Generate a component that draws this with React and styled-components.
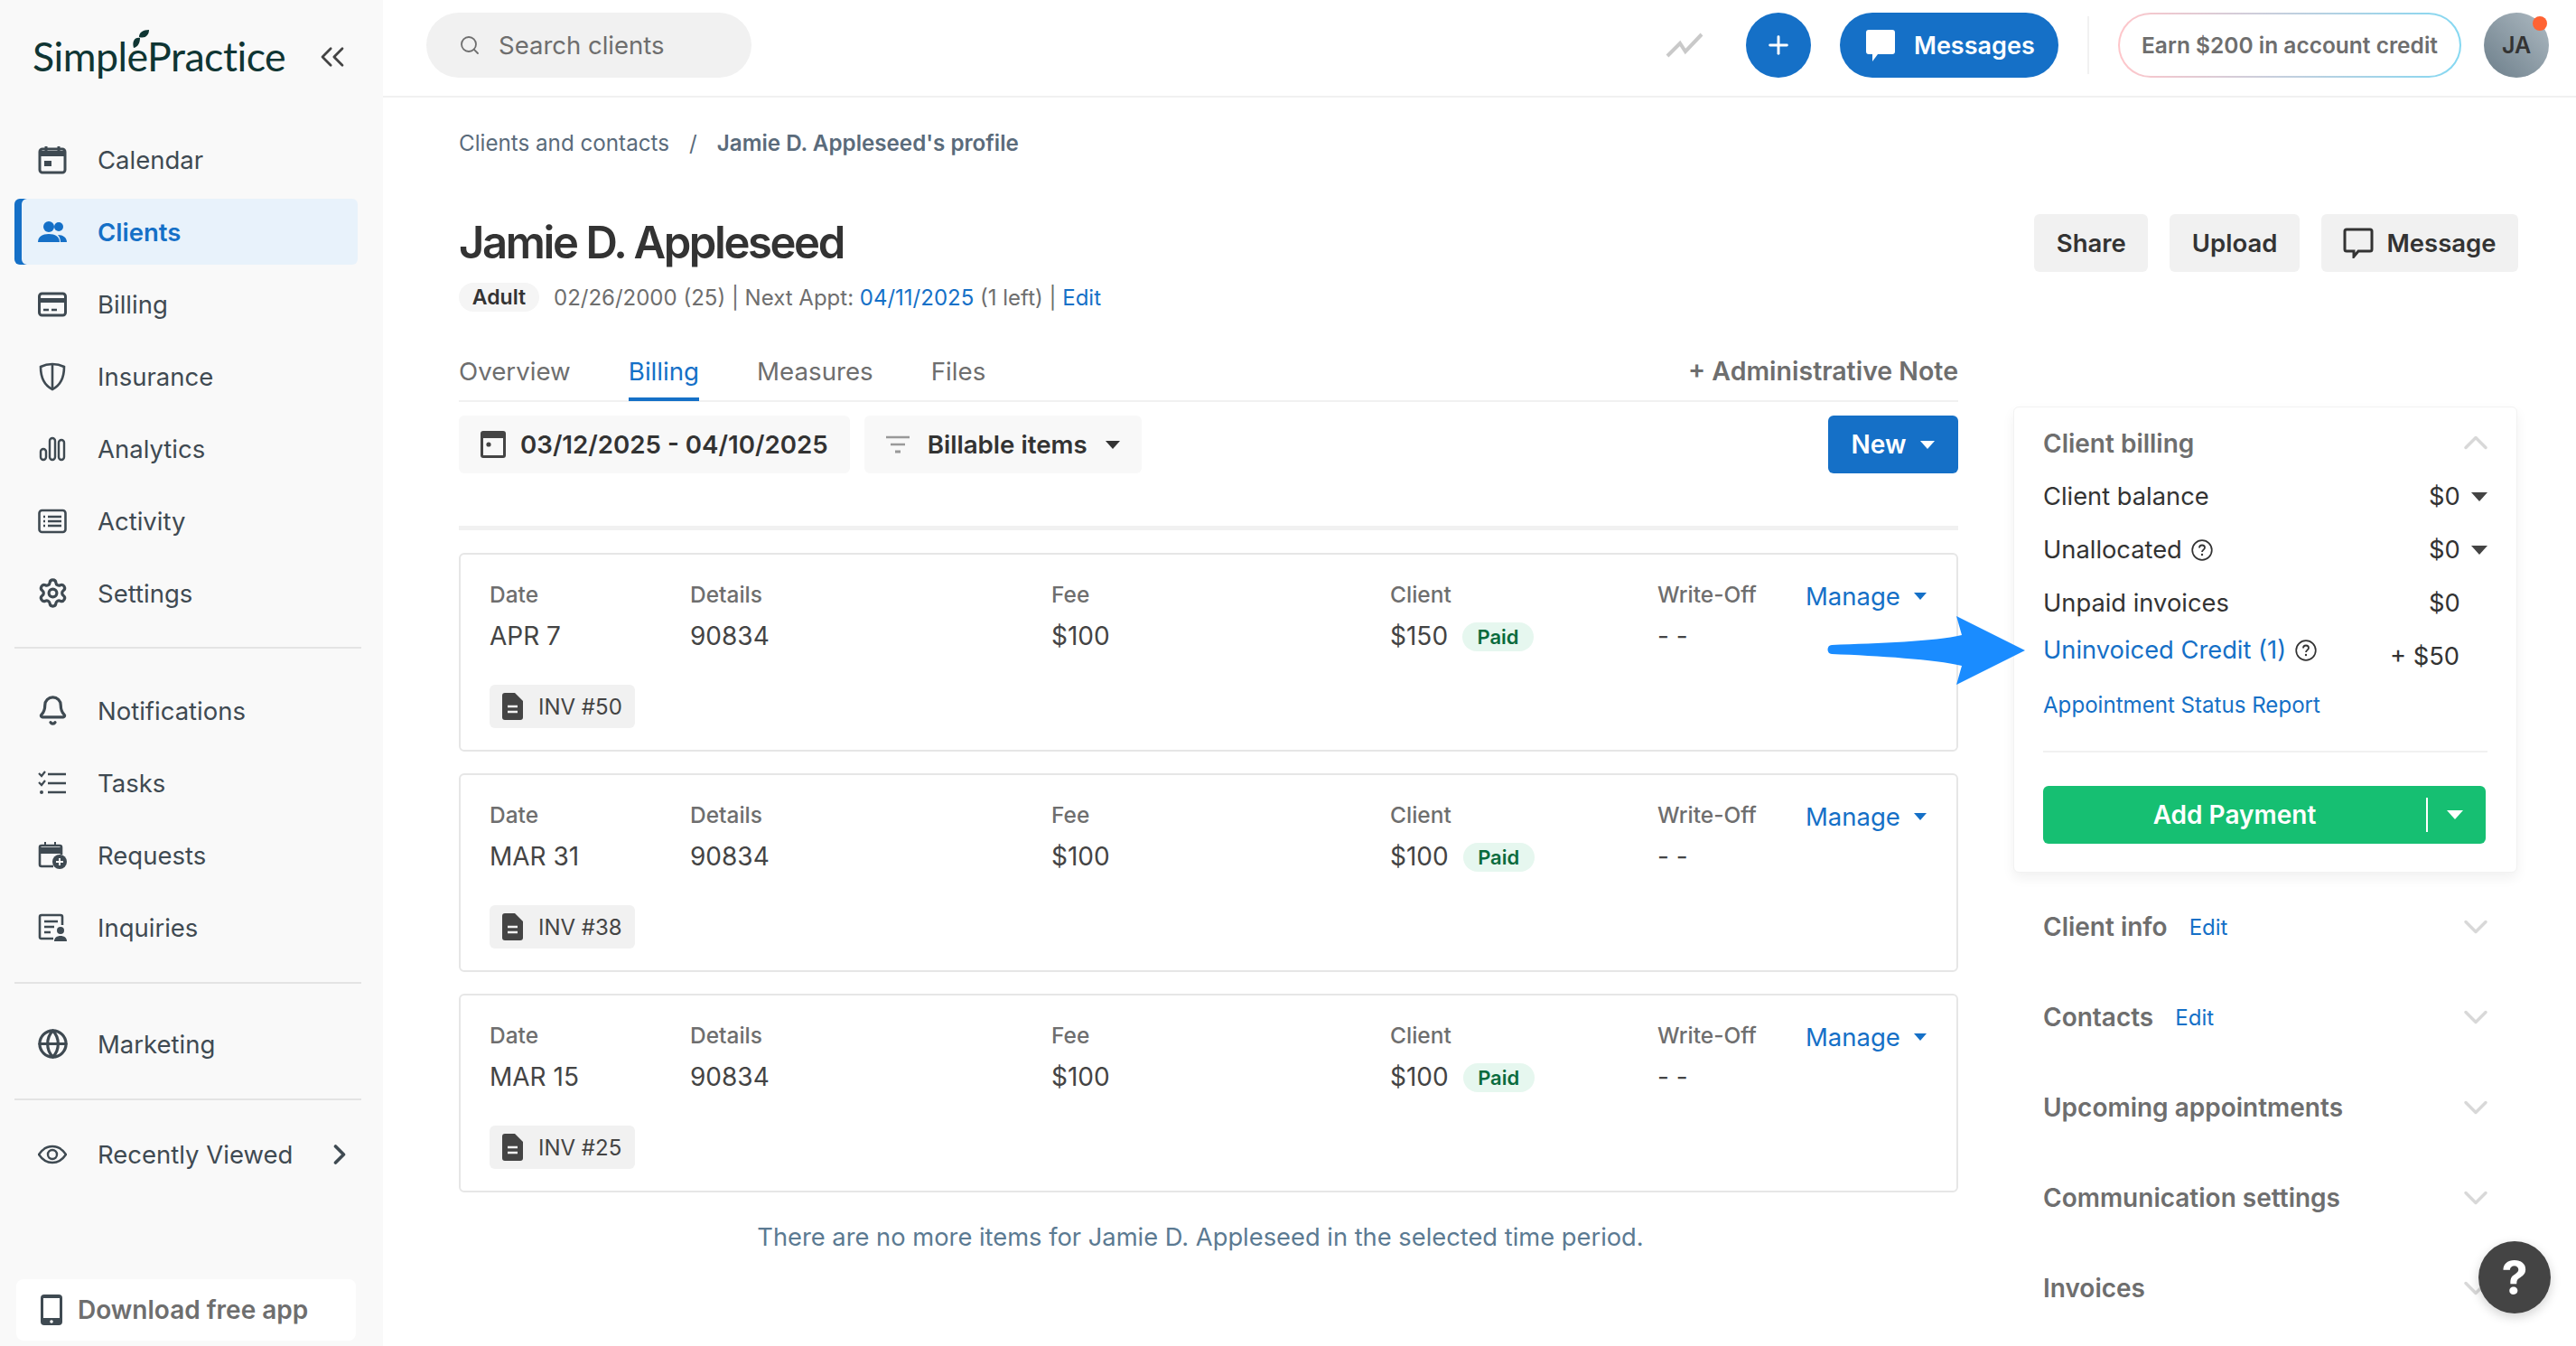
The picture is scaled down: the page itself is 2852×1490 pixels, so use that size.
import React from "react";
import styled, { createGlobalStyle } from "styled-components";
import { ChevronsLeft, ChevronRight, ChevronDown, ChevronUp, Search, Plus, Settings, Bell, Globe } from "lucide-react";

const GlobalStyle = createGlobalStyle`
  html, body {
    margin: 0;
    padding: 0;
    background: #ffffff;
    font-family: Inter, "Noto Sans", sans-serif;
    color: #333333;
    overflow: hidden;
  }
  * { box-sizing: border-box; }
`;

const BLUE = "#1570c7";

const Page = styled.div`
  display: grid;
  grid-template-columns: 424px 1fr;
  width: 2852px;
  height: 1490px;
  overflow: hidden;
`;

/* ---------- sidebar ---------- */
const Sidebar = styled.aside`
  display: flex;
  flex-direction: column;
  height: 1490px;
  background: #f9f9f9;
  padding: 0 24px 6px 16px;
`;

const LogoRow = styled.div`
  display: flex;
  align-items: center;
  justify-content: space-between;
  height: 125px;
  padding: 0 10px 0 20px;
  margin-bottom: 15px;
  color: #444444;
`;

const LogoWrap = styled.div`
  position: relative;
  font-family: Lato, sans-serif;
  font-size: 44.7px;
  font-weight: 400;
  letter-spacing: -0.5px;
  color: #0f3533;
  line-height: 1;
  margin-top: -1px;
`;

const Leaf = styled.svg`
  position: absolute;
  left: 110px;
  top: -7px;
  width: 20px;
  height: 20px;
`;

const NavGroup = styled.nav`
  display: flex;
  flex-direction: column;
  gap: 7px;
  margin-top: ${(p) => p.$top || 0}px;
  margin-bottom: ${(p) => p.$bottom || 0}px;
`;

const NavItem = styled.a`
  display: flex;
  align-items: center;
  gap: 34px;
  height: 73px;
  width: 380px;
  padding-left: 26px;
  white-space: nowrap;
  font-size: 27.5px;
  font-weight: ${(p) => (p.$active ? 600 : 400)};
  color: ${(p) => (p.$active ? BLUE : "#3f4a52")};
  background: ${(p) => (p.$active ? "#e8f2fb" : "transparent")};
  border-radius: 6px;
  box-shadow: ${(p) => (p.$active ? `inset 8px 0 0 ${BLUE}` : "none")};
`;

const NavIcon = styled.span`
  display: flex;
  align-items: center;
  justify-content: center;
  width: 32px;
  height: 32px;
  flex: none;

  svg {
    flex: none;
  }
`;

const Divider = styled.hr`
  width: 384px;
  height: 2px;
  margin: 0;
  border: 0;
  background: #e4e4e4;
`;

const RecentArrow = styled.span`
  display: flex;
  margin-left: auto;
  margin-right: 28px;
`;

const DownloadBox = styled.div`
  display: flex;
  align-items: center;
  gap: 17px;
  width: 376px;
  height: 68px;
  margin: auto 0 0 2px;
  padding-left: 27px;
  background: #ffffff;
  border-radius: 8px;
  font-size: 28px;
  font-weight: 600;
  color: #6e6e6e;
`;

/* ---------- top bar ---------- */
const Main = styled.main`
  display: flex;
  flex-direction: column;
  min-width: 0;
`;

const TopBar = styled.header`
  display: flex;
  align-items: center;
  height: 108px;
  padding: 0 30px 6px 48px;
  border-bottom: 2px solid #f1f1f1;
  flex: none;
`;

const SearchPill = styled.div`
  display: flex;
  align-items: center;
  gap: 20px;
  width: 360px;
  height: 72px;
  padding-left: 36px;
  border-radius: 36px;
  background: #f1f1f1;
  color: #6e6e6e;
  font-size: 27.5px;
`;

const TrendIcon = styled.svg`
  width: 42px;
  height: 30px;
  margin-left: auto;
  margin-right: 47px;
`;

const RoundButton = styled.button`
  display: flex;
  align-items: center;
  justify-content: center;
  width: 72px;
  height: 72px;
  border: 0;
  padding: 0;
  border-radius: 50%;
  background: ${BLUE};
  color: #ffffff;
  margin-right: 32px;
`;

const MessagesButton = styled.button`
  display: flex;
  align-items: center;
  gap: 19px;
  width: 242px;
  height: 72px;
  padding: 0 0 0 27px;
  border: 0;
  border-radius: 36px;
  background: ${BLUE};
  color: #ffffff;
  font-family: inherit;
  font-size: 27px;
  font-weight: 600;
`;

const TopSeparator = styled.span`
  width: 2px;
  height: 64px;
  margin: 0 32px;
  background: #f1f1f1;
`;

const CreditPill = styled.div`
  display: flex;
  align-items: center;
  justify-content: center;
  width: 380px;
  height: 72px;
  border: 2px solid transparent;
  border-radius: 36px;
  background: linear-gradient(#fff, #fff) padding-box,
    linear-gradient(90deg, #ffc6ca, #84d8f2) border-box;
  color: #6e6e6e;
  font-size: 24.5px;
  font-weight: 600;
`;

const Avatar = styled.div`
  position: relative;
  display: flex;
  align-items: center;
  justify-content: center;
  width: 72px;
  height: 72px;
  margin-left: 25px;
  border-radius: 50%;
  background: linear-gradient(45deg, #6c7e8a, #aebac2);
  color: #333333;
  font-size: 25px;
  font-weight: 600;
`;

const AvatarDot = styled.span`
  position: absolute;
  top: 4px;
  right: 2px;
  width: 16px;
  height: 16px;
  border-radius: 50%;
  background: #ff6333;
`;

/* ---------- profile ---------- */
const Content = styled.div`
  flex: 1;
  padding: 30px 64px 0 84px;
`;

const Breadcrumbs = styled.div`
  display: flex;
  gap: 22px;
  height: 40px;
  align-items: center;
  font-size: 24.2px;
  color: #5a6b7b;
`;

const Crumb = styled.span`
  font-weight: ${(p) => (p.$current ? 600 : 400)};
`;

const ProfileHead = styled.div`
  display: flex;
  justify-content: space-between;
  align-items: flex-start;
  margin-top: 59px;
`;

const Title = styled.h1`
  margin: 2px 0 0;
  font-size: 49px;
  line-height: 60px;
  font-weight: 600;
  letter-spacing: -2.4px;
  color: #333333;
`;

const MetaRow = styled.div`
  display: flex;
  align-items: center;
  gap: 16px;
  margin-top: 14px;
  font-size: 24px;
  color: #6e6e6e;
`;

const AdultPill = styled.span`
  display: flex;
  align-items: center;
  justify-content: center;
  width: 89px;
  height: 32px;
  border-radius: 16px;
  background: #f5f5f5;
  color: #333333;
  font-size: 23px;
  font-weight: 600;
`;

const TextLink = styled.a`
  color: ${BLUE};
`;

const Actions = styled.div`
  display: flex;
  gap: 24px;
`;

const ActionButton = styled.button`
  display: flex;
  align-items: center;
  gap: 14px;
  height: 64px;
  padding: 0 24.5px;
  border: 0;
  border-radius: 6px;
  background: #f1f1f1;
  color: #333333;
  font-family: inherit;
  font-size: 27.5px;
  font-weight: 600;
`;

const Columns = styled.div`
  display: grid;
  grid-template-columns: 1660px 558px;
  column-gap: 61px;
  margin-top: 35px;
`;

const LeftCol = styled.section`
  min-width: 0;
`;

const TabRow = styled.div`
  display: flex;
  align-items: flex-start;
  gap: 64px;
  height: 65px;
  border-bottom: 2px solid #f1f1f1;
  font-size: 27.7px;
`;

const Tab = styled.a`
  height: 64px;
  padding-top: 11px;
  line-height: 40px;
  color: ${(p) => (p.$active ? BLUE : "#6e6e6e")};
  border-bottom: 4px solid ${(p) => (p.$active ? BLUE : "transparent")};
`;

const AdminNote = styled.a`
  height: 64px;
  padding-top: 11px;
  margin-left: auto;
  line-height: 40px;
  font-size: 28.5px;
  font-weight: 600;
  color: #6e6e6e;
`;

const Toolbar = styled.div`
  display: flex;
  gap: 16px;
  margin-top: 15px;
`;

const FilterButton = styled.button`
  display: flex;
  align-items: center;
  gap: ${(p) => p.$gap}px;
  height: 64px;
  padding: 0 24px;
  border: 0;
  border-radius: 6px;
  background: #f8f8f8;
  color: #333333;
  font-family: inherit;
  font-size: 27.7px;
  font-weight: 600;
`;

const NewButton = styled.button`
  display: flex;
  align-items: center;
  justify-content: center;
  gap: 16px;
  width: 144px;
  height: 64px;
  margin-left: auto;
  padding: 0;
  border: 0;
  border-radius: 6px;
  background: ${BLUE};
  color: #ffffff;
  font-family: inherit;
  font-size: 28px;
  font-weight: 600;
`;

const Caret = styled.span`
  display: inline-block;
  flex: none;
  width: 0;
  height: 0;
  border-left: ${(p) => p.$size || 8}px solid transparent;
  border-right: ${(p) => p.$size || 8}px solid transparent;
  border-top: ${(p) => (p.$size || 8) + 1}px solid ${(p) => p.$color || "currentColor"};
`;

const ThickRule = styled.div`
  height: 5px;
  margin: 58px 0 25px;
  background: #f1f1f1;
`;

const CardList = styled.div`
  display: flex;
  flex-direction: column;
  gap: 24px;
`;

const ItemCard = styled.article`
  height: 220px;
  padding: 29px 0 0 32px;
  border: 2px solid #e6e6e6;
  border-radius: 6px;
`;

const ItemGrid = styled.div`
  display: grid;
  grid-template-columns: 222px 400px 375px 296px 164px 150px;
`;

const CellLabel = styled.div`
  height: 30px;
  line-height: 30px;
  font-size: 24.5px;
  font-weight: 500;
  color: #6e6e6e;
`;

const CellValue = styled.div`
  display: flex;
  align-items: center;
  gap: 16px;
  height: 36px;
  margin-top: 13px;
  font-size: 28px;
  color: #444444;
`;

const PaidPill = styled.span`
  display: flex;
  align-items: center;
  justify-content: center;
  width: 79px;
  height: 32px;
  margin-top: 2px;
  border-radius: 16px;
  background: #e6f7ef;
  color: #0a6b3d;
  font-size: 22px;
  font-weight: 600;
`;

const ManageLink = styled.a`
  display: flex;
  align-items: center;
  gap: 15px;
  height: 34px;
  font-size: 27.5px;
  color: ${BLUE};
`;

const InvoicePill = styled.div`
  display: inline-flex;
  align-items: center;
  gap: 16px;
  width: 161px;
  height: 48px;
  margin-top: 36px;
  padding-left: 14px;
  border-radius: 6px;
  background: #f1f1f1;
  font-size: 24px;
  color: #444444;
`;

const EndNote = styled.p`
  margin: 30px 0 0;
  padding-right: 18px;
  line-height: 40px;
  text-align: center;
  font-size: 27.3px;
  color: #5b7a92;
`;

/* ---------- right column ---------- */
const RightCol = styled.aside`
  padding-top: 70px;
`;

const BillingCard = styled.div`
  position: relative;
  height: 516px;
  padding: 22px 32px 0;
  border-radius: 6px;
  background: #ffffff;
  border: 1px solid #f2f2f2;
  box-shadow: 0 6px 14px rgba(0, 0, 0, 0.06);
`;

const SectionHead = styled.div`
  display: flex;
  align-items: center;
  justify-content: space-between;
  height: 36px;
  margin-bottom: 11px;
  font-size: 28px;
  font-weight: 600;
  color: #6e6e6e;
`;

const HeadChevron = styled.span`
  display: flex;
  margin-right: -9px;
  margin-top: -2px;
`;

const BalanceRow = styled.div`
  display: flex;
  align-items: center;
  height: 59px;
  font-size: 27.3px;
  color: #333333;
`;

const RowLabel = styled.span`
  display: flex;
  align-items: center;
  gap: 10px;
  flex: 1;
  color: ${(p) => (p.$link ? BLUE : "inherit")};
`;

const RowAmount = styled.span`
  width: 72px;
  text-align: left;
  padding-left: 27px;
`;

const RowSuffix = styled.span`
  display: flex;
  width: 20px;
  justify-content: flex-end;
`;

const CreditRow = styled.div`
  display: flex;
  align-items: flex-start;
  justify-content: space-between;
  height: 67px;
  padding: 6px 31px 0 0;
  font-size: 27.3px;
`;

const CreditAmount = styled.span`
  margin-top: 7px;
  color: #333333;
`;

const ReportLink = styled.a`
  display: block;
  line-height: 34px;
  font-size: 24.1px;
  color: ${BLUE};
`;

const PanelRule = styled.div`
  height: 2px;
  margin: 33px 0 37px;
  background: #f1f1f1;
`;

const PaymentButton = styled.div`
  display: flex;
  align-items: center;
  width: 490px;
  height: 64px;
  border-radius: 6px;
  background: #16bf72;
  color: #ffffff;
  font-size: 28px;
  font-weight: 600;
`;

const PaymentLabel = styled.span`
  width: 424px;
  text-align: center;
`;

const PaymentSplit = styled.span`
  display: flex;
  align-items: center;
  justify-content: center;
  flex: 1;
  height: 38px;
  padding-right: 4px;
  border-left: 2px solid #ffffff;
`;

const Accordions = styled.div`
  margin-top: 10px;
`;

const AccordionRow = styled.div`
  display: flex;
  align-items: center;
  gap: 24px;
  height: 100px;
  padding: 0 33px;
  font-size: 28px;
  font-weight: 600;
  color: #6e6e6e;
`;

const EditLink = styled.a`
  font-size: 24px;
  font-weight: 400;
  color: ${BLUE};
`;

const AccordionChevron = styled.span`
  display: flex;
  margin-left: auto;
  margin-right: -9px;
`;

const HelpButton = styled.button`
  position: fixed;
  left: 2744px;
  top: 1374px;
  width: 80px;
  height: 80px;
  padding: 0;
  border: 0;
  border-radius: 50%;
  background: #444444;
  color: #ffffff;
  font-family: inherit;
  font-size: 52px;
  font-weight: 700;
  box-shadow: 0 4px 12px rgba(0, 0, 0, 0.18);
`;

const ArrowSvg = styled.svg`
  position: fixed;
  left: 2020px;
  top: 676px;
  width: 226px;
  height: 90px;
`;

/* ---------- drawn icons ---------- */
const Svg = ({ children, size = 32, vb = "0 0 32 32", ...rest }) => (
  <svg width={size} height={size} viewBox={vb} fill="none" {...rest}>
    {children}
  </svg>
);

const CalendarIcon = ({ color = "#3f4a52" }) => (
  <Svg>
    <rect x="2" y="4" width="28" height="26" rx="3" stroke={color} strokeWidth="3" />
    <path d="M2 6h28v6H2z" fill={color} />
    <path d="M9 1v5M23 1v5" stroke={color} strokeWidth="3" />
    <rect x="7" y="17" width="8" height="6" fill={color} />
  </Svg>
);

const ClientsIcon = () => (
  <Svg>
    <circle cx="12" cy="10" r="6" fill={BLUE} />
    <circle cx="23" cy="10" r="5" fill={BLUE} />
    <path d="M0 27c0-6 5-9 12-9s12 3 12 9z" fill={BLUE} />
    <path d="M25 27h7c0-5-4-8-10-8 2 2 3 5 3 8z" fill={BLUE} />
  </Svg>
);

const BillingIcon = () => (
  <Svg>
    <rect x="1.5" y="4" width="29" height="24" rx="3" stroke="#3f4a52" strokeWidth="3" />
    <path d="M2 9h28v5H2z" fill="#3f4a52" />
    <path d="M6 22h6M15 22h6" stroke="#3f4a52" strokeWidth="2.4" />
  </Svg>
);

const ShieldIcon = () => (
  <Svg>
    <path d="M16 2c5 0 9 1 13 3 0 11-3 20-13 25C6 25 3 16 3 5c4-2 8-3 13-3z" stroke="#3f4a52" strokeWidth="2.6" />
    <path d="M16 2v28" stroke="#3f4a52" strokeWidth="2.6" />
  </Svg>
);

const AnalyticsIcon = () => (
  <Svg>
    <rect x="3" y="16" width="6" height="12" rx="3" stroke="#3f4a52" strokeWidth="2.4" />
    <rect x="13" y="4" width="6" height="24" rx="3" stroke="#3f4a52" strokeWidth="2.4" />
    <rect x="23" y="6" width="6" height="22" rx="3" stroke="#3f4a52" strokeWidth="2.4" />
  </Svg>
);

const ActivityIcon = () => (
  <Svg>
    <rect x="1.5" y="4" width="29" height="24" rx="3" stroke="#3f4a52" strokeWidth="2.6" />
    <path d="M11 11h15M11 16h15M11 21h15" stroke="#3f4a52" strokeWidth="2.4" />
    <path d="M6 11h2M6 16h2M6 21h2" stroke="#3f4a52" strokeWidth="2.4" />
  </Svg>
);

const TasksIcon = () => (
  <Svg>
    <path d="M11 6h20M11 16h20M11 26h20" stroke="#3f4a52" strokeWidth="2.4" />
    <path d="M1 5l3 3 4-5M1 15l3 3 4-5" stroke="#3f4a52" strokeWidth="2.2" />
    <circle cx="4" cy="26" r="2" fill="#3f4a52" />
  </Svg>
);

const RequestsIcon = () => (
  <Svg>
    <path d="M17 28H4a2 2 0 0 1-2-2V7a2 2 0 0 1 2-2h20a2 2 0 0 1 2 2v8" stroke="#3f4a52" strokeWidth="2.6" />
    <path d="M2 8h24v5H2zM8 1v5M19 1v5" stroke="#3f4a52" strokeWidth="2" fill="#3f4a52" />
    <circle cx="24" cy="23" r="8" fill="#3f4a52" />
    <path d="M24 19v8M20 23h8" stroke="#f9f9f9" strokeWidth="2" />
  </Svg>
);

const InquiriesIcon = () => (
  <Svg>
    <path d="M17 28H3.5A1.5 1.5 0 0 1 2 26.500V4a2 2 0 0 1 2-2h21a2 2 0 0 1 2 2v9" stroke="#3f4a52" strokeWidth="2.6" />
    <path d="M7 9h15M7 15h11M7 21h7" stroke="#3f4a52" strokeWidth="2.4" />
    <circle cx="25" cy="19" r="4" fill="#3f4a52" />
    <path d="M18 31c0-4 3-6 7-6s7 2 7 6z" fill="#3f4a52" />
  </Svg>
);

const EyeIcon = () => (
  <Svg>
    <path d="M1 16C5 10 10 7 16 7s11 3 15 9c-4 6-9 9-15 9S5 22 1 16z" stroke="#3f4a52" strokeWidth="2.4" />
    <circle cx="16" cy="16" r="5" stroke="#3f4a52" strokeWidth="2.4" />
  </Svg>
);

const PhoneIcon = () => (
  <Svg width={24} height={34} vb="0 0 24 34">
    <rect width="24" height="34" rx="4" fill="#3f4a52" />
    <rect x="3" y="4" width="18" height="22" fill="#ffffff" />
    <circle cx="12" cy="30" r="1.800" fill="#ffffff" />
  </Svg>
);

const BubbleIcon = ({ size = 36 }) => (
  <Svg size={size} vb="0 0 34 36">
    <path d="M4 1h26a3 3 0 0 1 3 3v21a3 3 0 0 1-3 3H14l-6 8v-8H4a3 3 0 0 1-3-3V4a3 3 0 0 1 3-3z" fill="currentColor" />
  </Svg>
);

const BubbleOutline = () => (
  <Svg size={34} vb="0 0 34 34">
    <path d="M4 2h26a2 2 0 0 1 2 2v20a2 2 0 0 1-2 2H17l-5 6v-6H4a2 2 0 0 1-2-2V4a2 2 0 0 1 2-2z" stroke="#333333" strokeWidth="3" />
  </Svg>
);

const DateIcon = () => (
  <Svg width={28} height={30} vb="0 0 28 30">
    <path d="M3 0h22a3 3 0 0 1 3 3v24a3 3 0 0 1-3 3H3a3 3 0 0 1-3-3V3a3 3 0 0 1 3-3z" fill="#444444" />
    <rect x="3" y="8" width="22" height="19" fill="#f8f8f8" />
    <circle cx="9" cy="15" r="2.600" fill="#444444" />
  </Svg>
);

const FilterIcon = () => (
  <Svg size={26} vb="0 0 26 20">
    <path d="M0 2h26M5 10h16" stroke="#999999" strokeWidth="2.600" />
    <path d="M10 18h6" stroke="#999999" strokeWidth="3" />
  </Svg>
);

const DocIcon = () => (
  <Svg width={24} height={30} vb="0 0 24 30">
    <path d="M3 0h11l9 9v18a3 3 0 0 1-3 3H3a3 3 0 0 1-3-3V3a3 3 0 0 1 3-3z" fill="#444444" />
    <path d="M6 15h11M6 21h11" stroke="#f1f1f1" strokeWidth="2.600" />
  </Svg>
);

const HelpDot = ({ size = 24 }) => (
  <Svg size={size} vb="0 0 24 24">
    <circle cx="12" cy="12" r="10.800" stroke="#333333" strokeWidth="1.700" />
    <path d="M9 9.500c0-2 1.500-3 3-3s3 1 3 2.800c0 2.200-3 2.500-3 4.700" stroke="#333333" strokeWidth="1.800" />
    <circle cx="12" cy="17" r="1.200" fill="#333333" />
  </Svg>
);

const navIconProps = { size: 35, color: "#3f4a52", strokeWidth: 2.2 };

const items = [
  { date: "APR 7", client: "$150", inv: "INV #50" },
  { date: "MAR 31", client: "$100", inv: "INV #38" },
  { date: "MAR 15", client: "$100", inv: "INV #25" },
];

const accordions = [
  { name: "Client info", edit: true },
  { name: "Contacts", edit: true },
  { name: "Upcoming appointments" },
  { name: "Communication settings" },
  { name: "Invoices" },
];

function Nav({ icon, label, active, children }) {
  return (
    <NavItem $active={active}>
      <NavIcon>{icon}</NavIcon>
      {label}
      {children}
    </NavItem>
  );
}

export default function App() {
  return (
    <Page>
      <GlobalStyle />
      <Sidebar>
        <LogoRow>
          <LogoWrap>
            SimplePractice
            <Leaf viewBox="0 0 20 20">
              <path d="M2 20C0 13 3 8 9 9c0 5-2 10-7 11zM8 8c0-5 4-8 11-8 0 6-4 10-11 8z" fill="#0f3533" />
            </Leaf>
          </LogoWrap>
          <ChevronsLeft size={44} color="#444444" strokeWidth={1.5} />
        </LogoRow>

        <NavGroup $bottom={23}>
          <Nav icon={<CalendarIcon />} label="Calendar" />
          <Nav icon={<ClientsIcon />} label="Clients" active />
          <Nav icon={<BillingIcon />} label="Billing" />
          <Nav icon={<ShieldIcon />} label="Insurance" />
          <Nav icon={<AnalyticsIcon />} label="Analytics" />
          <Nav icon={<ActivityIcon />} label="Activity" />
          <Nav icon={<Settings {...navIconProps} />} label="Settings" />
        </NavGroup>
        <Divider />
        <NavGroup $top={32} $bottom={24}>
          <Nav icon={<Bell {...navIconProps} />} label="Notifications" />
          <Nav icon={<TasksIcon />} label="Tasks" />
          <Nav icon={<RequestsIcon />} label="Requests" />
          <Nav icon={<InquiriesIcon />} label="Inquiries" />
        </NavGroup>
        <Divider />
        <NavGroup $top={30} $bottom={24}>
          <Nav icon={<Globe {...navIconProps} />} label="Marketing" />
        </NavGroup>
        <Divider />
        <NavGroup $top={23}>
          <Nav icon={<EyeIcon />} label="Recently Viewed">
            <RecentArrow>
              <ChevronRight size={36} color="#3f4a52" strokeWidth={2.4} />
            </RecentArrow>
          </Nav>
        </NavGroup>

        <DownloadBox>
          <PhoneIcon />
          Download free app
        </DownloadBox>
      </Sidebar>

      <Main>
        <TopBar>
          <SearchPill>
            <Search size={24} color="#6e6e6e" strokeWidth={1.8} />
            Search clients
          </SearchPill>
          <TrendIcon viewBox="0 0 42 30">
            <path d="M2 27l14-14 6 9L40 3" stroke="#c9c9c9" strokeWidth="4" fill="none" />
          </TrendIcon>
          <RoundButton>
            <Plus size={32} strokeWidth={2.2} />
          </RoundButton>
          <MessagesButton>
            <BubbleIcon />
            Messages
          </MessagesButton>
          <TopSeparator />
          <CreditPill>Earn $200 in account credit</CreditPill>
          <Avatar>
            JA
            <AvatarDot />
          </Avatar>
        </TopBar>

        <Content>
          <Breadcrumbs>
            <Crumb>Clients and contacts</Crumb>
            <Crumb>/</Crumb>
            <Crumb $current>Jamie D. Appleseed's profile</Crumb>
          </Breadcrumbs>

          <ProfileHead>
            <div>
              <Title>Jamie D. Appleseed</Title>
              <MetaRow>
                <AdultPill>Adult</AdultPill>
                <span>
                  02/26/2000 (25) | Next Appt: <TextLink>04/11/2025</TextLink> (1 left) | <TextLink>Edit</TextLink>
                </span>
              </MetaRow>
            </div>
            <Actions>
              <ActionButton>Share</ActionButton>
              <ActionButton>Upload</ActionButton>
              <ActionButton>
                <BubbleOutline />
                Message
              </ActionButton>
            </Actions>
          </ProfileHead>

          <Columns>
            <LeftCol>
              <TabRow>
                <Tab>Overview</Tab>
                <Tab $active>Billing</Tab>
                <Tab>Measures</Tab>
                <Tab>Files</Tab>
                <AdminNote>+ Administrative Note</AdminNote>
              </TabRow>

              <Toolbar>
                <FilterButton $gap={16}>
                  <DateIcon />
                  03/12/2025 - 04/10/2025
                </FilterButton>
                <FilterButton $gap={20}>
                  <FilterIcon />
                  Billable items
                  <Caret />
                </FilterButton>
                <NewButton>
                  New
                  <Caret />
                </NewButton>
              </Toolbar>

              <ThickRule />

              <CardList>
                {items.map((item) => (
                  <ItemCard key={item.inv}>
                    <ItemGrid>
                      <div>
                        <CellLabel>Date</CellLabel>
                        <CellValue>{item.date}</CellValue>
                      </div>
                      <div>
                        <CellLabel>Details</CellLabel>
                        <CellValue>90834</CellValue>
                      </div>
                      <div>
                        <CellLabel>Fee</CellLabel>
                        <CellValue>$100</CellValue>
                      </div>
                      <div>
                        <CellLabel>Client</CellLabel>
                        <CellValue>
                          {item.client}
                          <PaidPill>Paid</PaidPill>
                        </CellValue>
                      </div>
                      <div>
                        <CellLabel>Write-Off</CellLabel>
                        <CellValue>- -</CellValue>
                      </div>
                      <ManageLink>
                        Manage
                        <Caret $size={7} />
                      </ManageLink>
                    </ItemGrid>
                    <InvoicePill>
                      <DocIcon />
                      {item.inv}
                    </InvoicePill>
                  </ItemCard>
                ))}
              </CardList>

              <EndNote>There are no more items for Jamie D. Appleseed in the selected time period.</EndNote>
            </LeftCol>

            <RightCol>
              <BillingCard>
                <SectionHead>
                  Client billing
                  <HeadChevron>
                    <ChevronUp size={44} color="#d8d8d8" strokeWidth={1.9} />
                  </HeadChevron>
                </SectionHead>
                <BalanceRow>
                  <RowLabel>Client balance</RowLabel>
                  <RowAmount>$0</RowAmount>
                  <RowSuffix><Caret $size={9} $color="#444444" /></RowSuffix>
                </BalanceRow>
                <BalanceRow>
                  <RowLabel>
                    Unallocated
                    <HelpDot />
                  </RowLabel>
                  <RowAmount>$0</RowAmount>
                  <RowSuffix><Caret $size={9} $color="#444444" /></RowSuffix>
                </BalanceRow>
                <BalanceRow>
                  <RowLabel>Unpaid invoices</RowLabel>
                  <RowAmount>$0</RowAmount>
                  <RowSuffix />
                </BalanceRow>
                <CreditRow>
                  <RowLabel $link>
                    Uninvoiced Credit (1)
                    <HelpDot />
                  </RowLabel>
                  <CreditAmount>+ $50</CreditAmount>
                </CreditRow>
                <ReportLink>Appointment Status Report</ReportLink>
                <PanelRule />
                <PaymentButton>
                  <PaymentLabel>Add Payment</PaymentLabel>
                  <PaymentSplit>
                    <Caret $size={9} />
                  </PaymentSplit>
                </PaymentButton>
              </BillingCard>

              <Accordions>
                {accordions.map((row) => (
                  <AccordionRow key={row.name}>
                    {row.name}
                    {row.edit && <EditLink>Edit</EditLink>}
                    <AccordionChevron>
                      <ChevronDown size={44} color="#d8d8d8" strokeWidth={1.9} />
                    </AccordionChevron>
                  </AccordionRow>
                ))}
              </Accordions>
            </RightCol>
          </Columns>
        </Content>
      </Main>

      <ArrowSvg viewBox="0 0 226 90">
        <path
          d="M8 38C60 36 122 34 152 27L146 6l76 38-76 38 6-21C122 54 60 50 8 48c-6 0-6-10 0-10z"
          fill="#1a8cff"
        />
      </ArrowSvg>
      <HelpButton>?</HelpButton>
    </Page>
  );
}
